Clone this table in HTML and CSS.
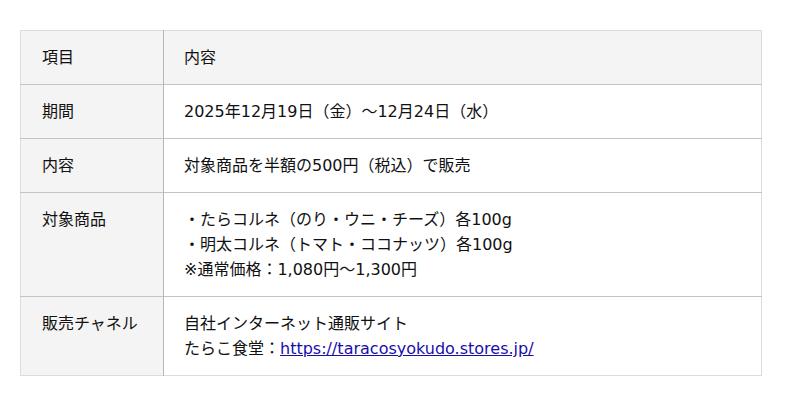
FILE: index.html
```html
<!DOCTYPE html>
<html lang="ja">
<head>
<meta charset="utf-8">
<link rel="stylesheet" href="styles.css">
</head>
<body>
<table class="info">
  <tr class="head">
    <th class="label">項目</th>
    <td class="value">内容</td>
  </tr>
  <tr>
    <th class="label">期間</th>
    <td class="value">2025年12月19日（金）〜12月24日（水）</td>
  </tr>
  <tr>
    <th class="label">内容</th>
    <td class="value">対象商品を半額の500円（税込）で販売</td>
  </tr>
  <tr>
    <th class="label">対象商品</th>
    <td class="value">・たらコルネ（のり・ウニ・チーズ）各100g<br>・明太コルネ（トマト・ココナッツ）各100g<br>※通常価格：1,080円〜1,300円</td>
  </tr>
  <tr>
    <th class="label">販売チャネル</th>
    <td class="value">自社インターネット通販サイト<br>たらこ食堂：<a class="link" href="#">https://taracosyokudo.stores.jp/</a></td>
  </tr>
</table>
</body>
</html>
```
FILE: styles.css
```css
html, body {
  margin: 0;
  background: #fff;
}
body {
  padding: 30px 38px 0 20px;
  font-family: "DejaVu Sans", "Noto Sans CJK JP", sans-serif;
  font-size: 16px;
  color: #111;
}
.info {
  width: 742px;
  border-collapse: collapse;
  border: 1px solid #dcdcdc;
}
.info tr {
  border-top: 1px solid #c4c4c4;
}
.info tr:first-child {
  border-top: 1px solid #dcdcdc;
}
.label {
  width: 143px;
  box-sizing: border-box;
  text-align: left;
  font-weight: normal;
  vertical-align: top;
  background: #f4f4f4;
  padding: 14px 0 14px 21px;
  line-height: 25px;
  border-right: 1px solid #b8b8b8;
}
.value {
  vertical-align: top;
  padding: 14px 20px 14px 20px;
  line-height: 25px;
}
.head .value {
  background: #f4f4f4;
}
.link {
  color: #1a0dab;
  text-decoration: underline;
}
```
